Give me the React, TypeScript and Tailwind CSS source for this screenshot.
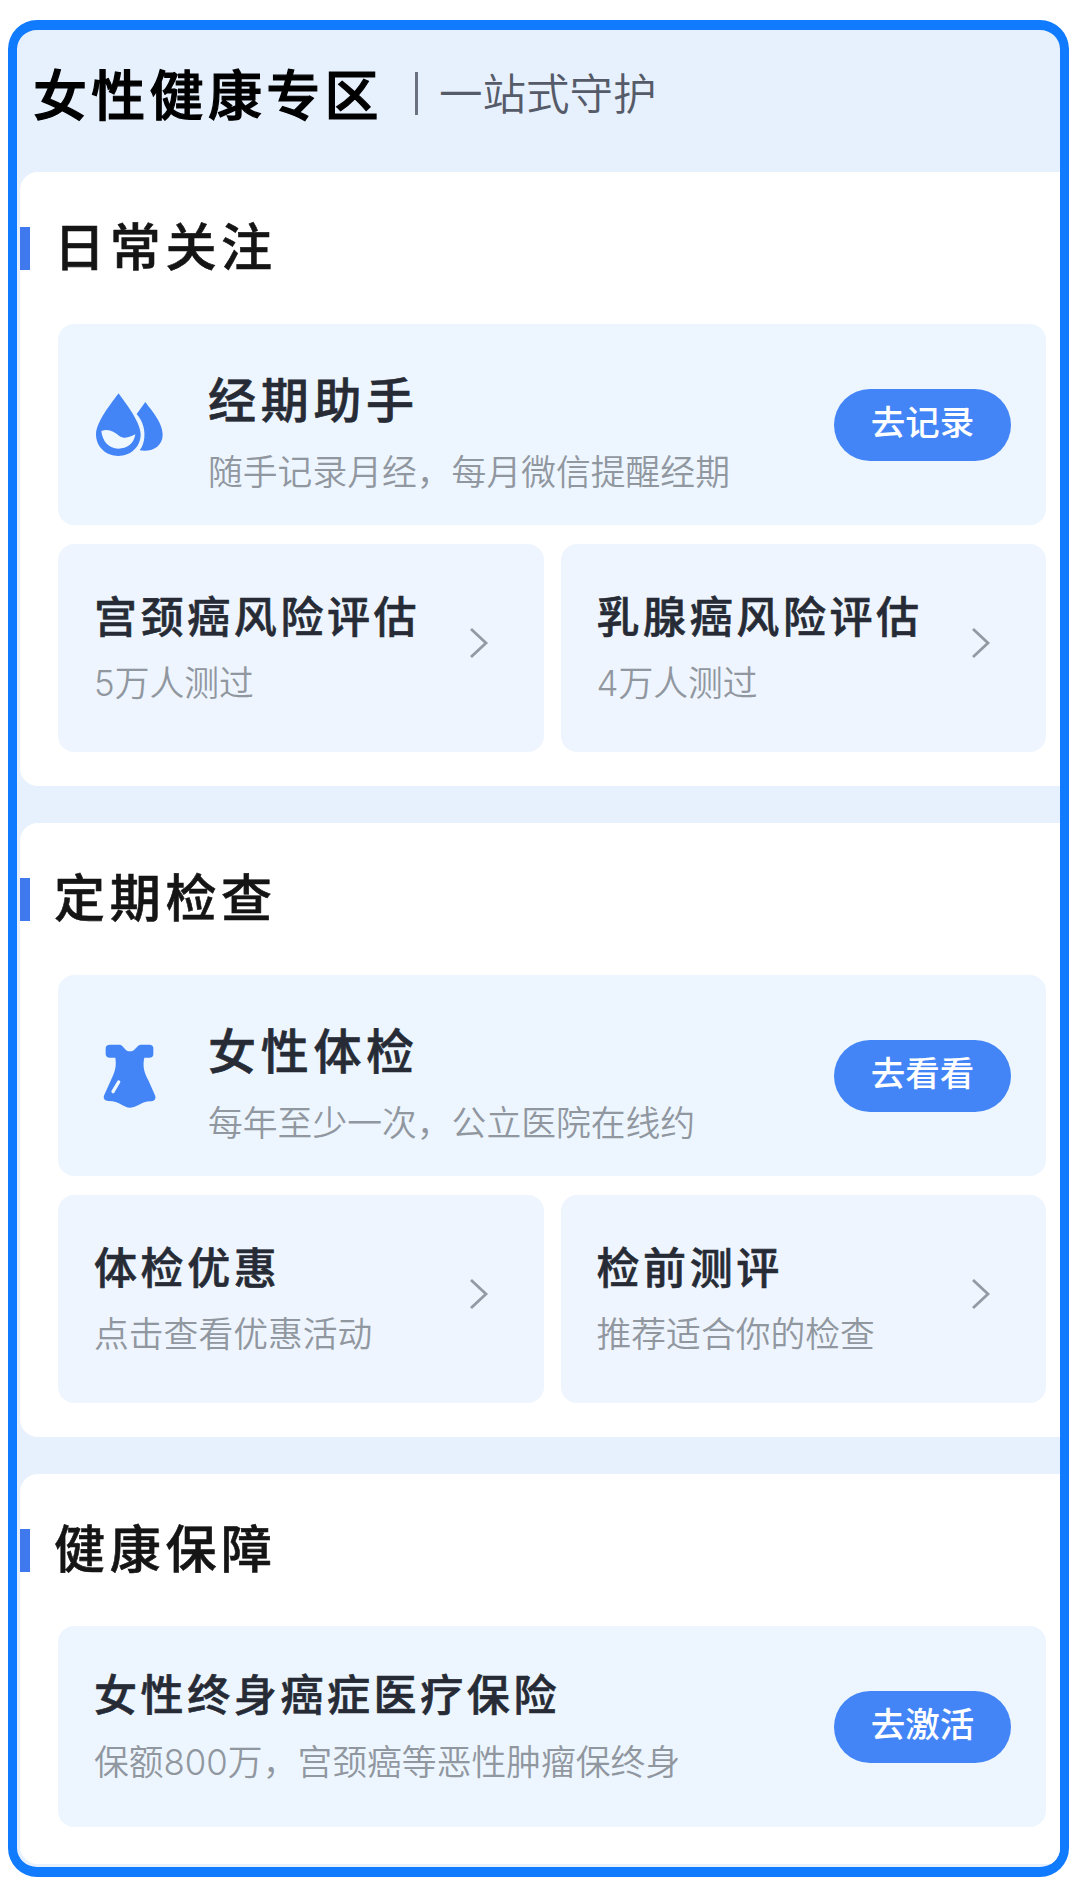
import type { ReactNode } from "react";

interface BannerProps {
    icon?: ReactNode;
    title: string;
    description: string;
    action: string;
}

interface TileProps {
    title: string;
    description: string;
}

const DropsIcon = () => (
    <svg viewBox="0 0 300 270" className="h-[90px] w-[100px] shrink-0">
        <path d="M116 40C122 51 182 122 182 163C182 201 152 228 115 228C78 228 48 201 48 163C48 122 108 52 116 40Z" fill="#4385f7" />
        <path d="M64 153C86 145 102 155 117 167C134 179 150 171 166 163C162 191 141 206 115 206C87 206 67 184 64 153Z" fill="#eff7ff" />
        <path d="M196 66C208 84 248 125 248 164C248 197 219 217 179 211C196 190 197 155 187 130C182 116 175 109 170 102Z" fill="#4385f7" />
    </svg>
);

const DressIcon = () => (
    <svg viewBox="0 0 300 270" className="h-[90px] w-[100px] shrink-0">
        <path d="M90 41H119C129 41 134 61 150 61C166 61 172 41 182 41H208C216 41 220 45 220 52V69C220 77 216 80 208 80H193C187 107 193 125 206 150L225 193C229 203 224 210 214 211C183 210 174 230 151 230C128 230 119 210 86 210C74 209 68 202 73 191L93 147C105 121 110 107 106 80H90C82 80 77 76 77 69V52C77 45 82 41 90 41Z" fill="#4385f7" />
        <path d="M116 153L99 182" stroke="#eff7ff" strokeWidth="10" strokeLinecap="round" />
    </svg>
);

const Chevron = () => (
    <svg viewBox="0 0 20 32" className="mt-[83px] mr-[55px] h-8 w-5 shrink-0" fill="none">
        <path d="M2 2L17 16L2 30" stroke="#939aa2" strokeWidth="2.8" />
    </svg>
);

const Banner = (props: BannerProps) => (
    <div className="flex h-[200.5px] items-center rounded-2xl bg-[#edf6ff] pr-[35px]">
        {props.icon ? <div className="pl-[22px] pr-[28px]">{props.icon}</div> : <div className="w-9" />}
        <div className="flex-1 whitespace-nowrap">
            {props.icon ? (
                <h3 className="mt-[17px] mb-[17px] text-[48px] leading-[60px] font-medium tracking-[4.7px] text-[#262b35] [-webkit-text-stroke:0.6px]">{props.title}</h3>
            ) : (
                <h3 className="-mt-px mb-[15px] text-[43px] leading-[56px] font-medium tracking-[3.6px] text-[#262b35] [-webkit-text-stroke:0.6px]">{props.title}</h3>
            )}
            <p className="text-[34.8px] leading-[48px] font-[350] text-[#91979f]">{props.description}</p>
        </div>
        <button className="h-[72px] w-[177px] rounded-full bg-[#4385f7] pb-1 text-[34.5px] leading-[68px] font-medium text-white">
            {props.action}
        </button>
    </div>
);

const Tile = (props: TileProps) => (
    <div className="flex h-[208px] justify-between rounded-2xl bg-[#eef5fe] pl-9">
        <div className="pt-[45px] whitespace-nowrap">
            <h3 className="mb-[14px] text-[43px] leading-[56px] font-medium tracking-[3.6px] text-[#262b35] [-webkit-text-stroke:0.6px]">{props.title}</h3>
            <p className="text-[34.8px] leading-[48px] font-[350] text-[#91979f]">{props.description}</p>
        </div>
        <Chevron />
    </div>
);

const Section = ({ title, children }: { title: string; children: ReactNode }) => (
    <section className="ml-[3px] rounded-l-[18px] bg-white pt-[42px] pb-[34.5px] last:pb-[37px]">
        <div className="mb-[50px] flex h-[60px] items-center">
            <div className="mt-[9px] h-[43px] w-[10px] bg-[#4079ee]" />
            <h2 className="mt-2 ml-6 text-[51px] leading-[60px] font-medium tracking-[4.7px] text-[#151515] [-webkit-text-stroke:0.6px]">{title}</h2>
        </div>
        <div className="flex flex-col gap-[19px] pr-[14px] pl-[38px]">{children}</div>
    </section>
);

export default function App() {
    return (
        <main className="h-[1886px] w-[1080px] bg-white pt-5 pl-2 font-[Inter,'Noto_Sans_CJK_SC',sans-serif]">
            <div className="h-[1857px] w-[1061px] overflow-hidden rounded-[29px] border-x-9 border-y-10 border-[#107bff] bg-[#e7f0fd]">
                <header className="flex h-[142.3px] items-start pt-[30px] pl-[16px]">
                    <h1 className="mt-[3px] w-[382px] text-[54px] leading-[68px] font-medium tracking-[4.3px] whitespace-nowrap text-black [-webkit-text-stroke:1.2px]">女性健康专区</h1>
                    <div className="mt-3 h-[43px] w-[3px] bg-[#6b7180]" />
                    <p className="mt-[3px] ml-[21px] text-[43.5px] leading-[62px] font-[350] text-[#555b68]">一站式守护</p>
                </header>
                <div className="flex flex-col gap-[37px]">
                    <Section title="日常关注">
                        <Banner icon={<DropsIcon />} title="经期助手" description="随手记录月经，每月微信提醒经期" action="去记录" />
                        <div className="grid grid-cols-2 gap-[17px]">
                            <Tile title="宫颈癌风险评估" description="5万人测过" />
                            <Tile title="乳腺癌风险评估" description="4万人测过" />
                        </div>
                    </Section>
                    <Section title="定期检查">
                        <Banner icon={<DressIcon />} title="女性体检" description="每年至少一次，公立医院在线约" action="去看看" />
                        <div className="grid grid-cols-2 gap-[17px]">
                            <Tile title="体检优惠" description="点击查看优惠活动" />
                            <Tile title="检前测评" description="推荐适合你的检查" />
                        </div>
                    </Section>
                    <Section title="健康保障">
                        <Banner title="女性终身癌症医疗保险" description="保额800万，宫颈癌等恶性肿瘤保终身" action="去激活" />
                    </Section>
                </div>
            </div>
        </main>
    );
}
